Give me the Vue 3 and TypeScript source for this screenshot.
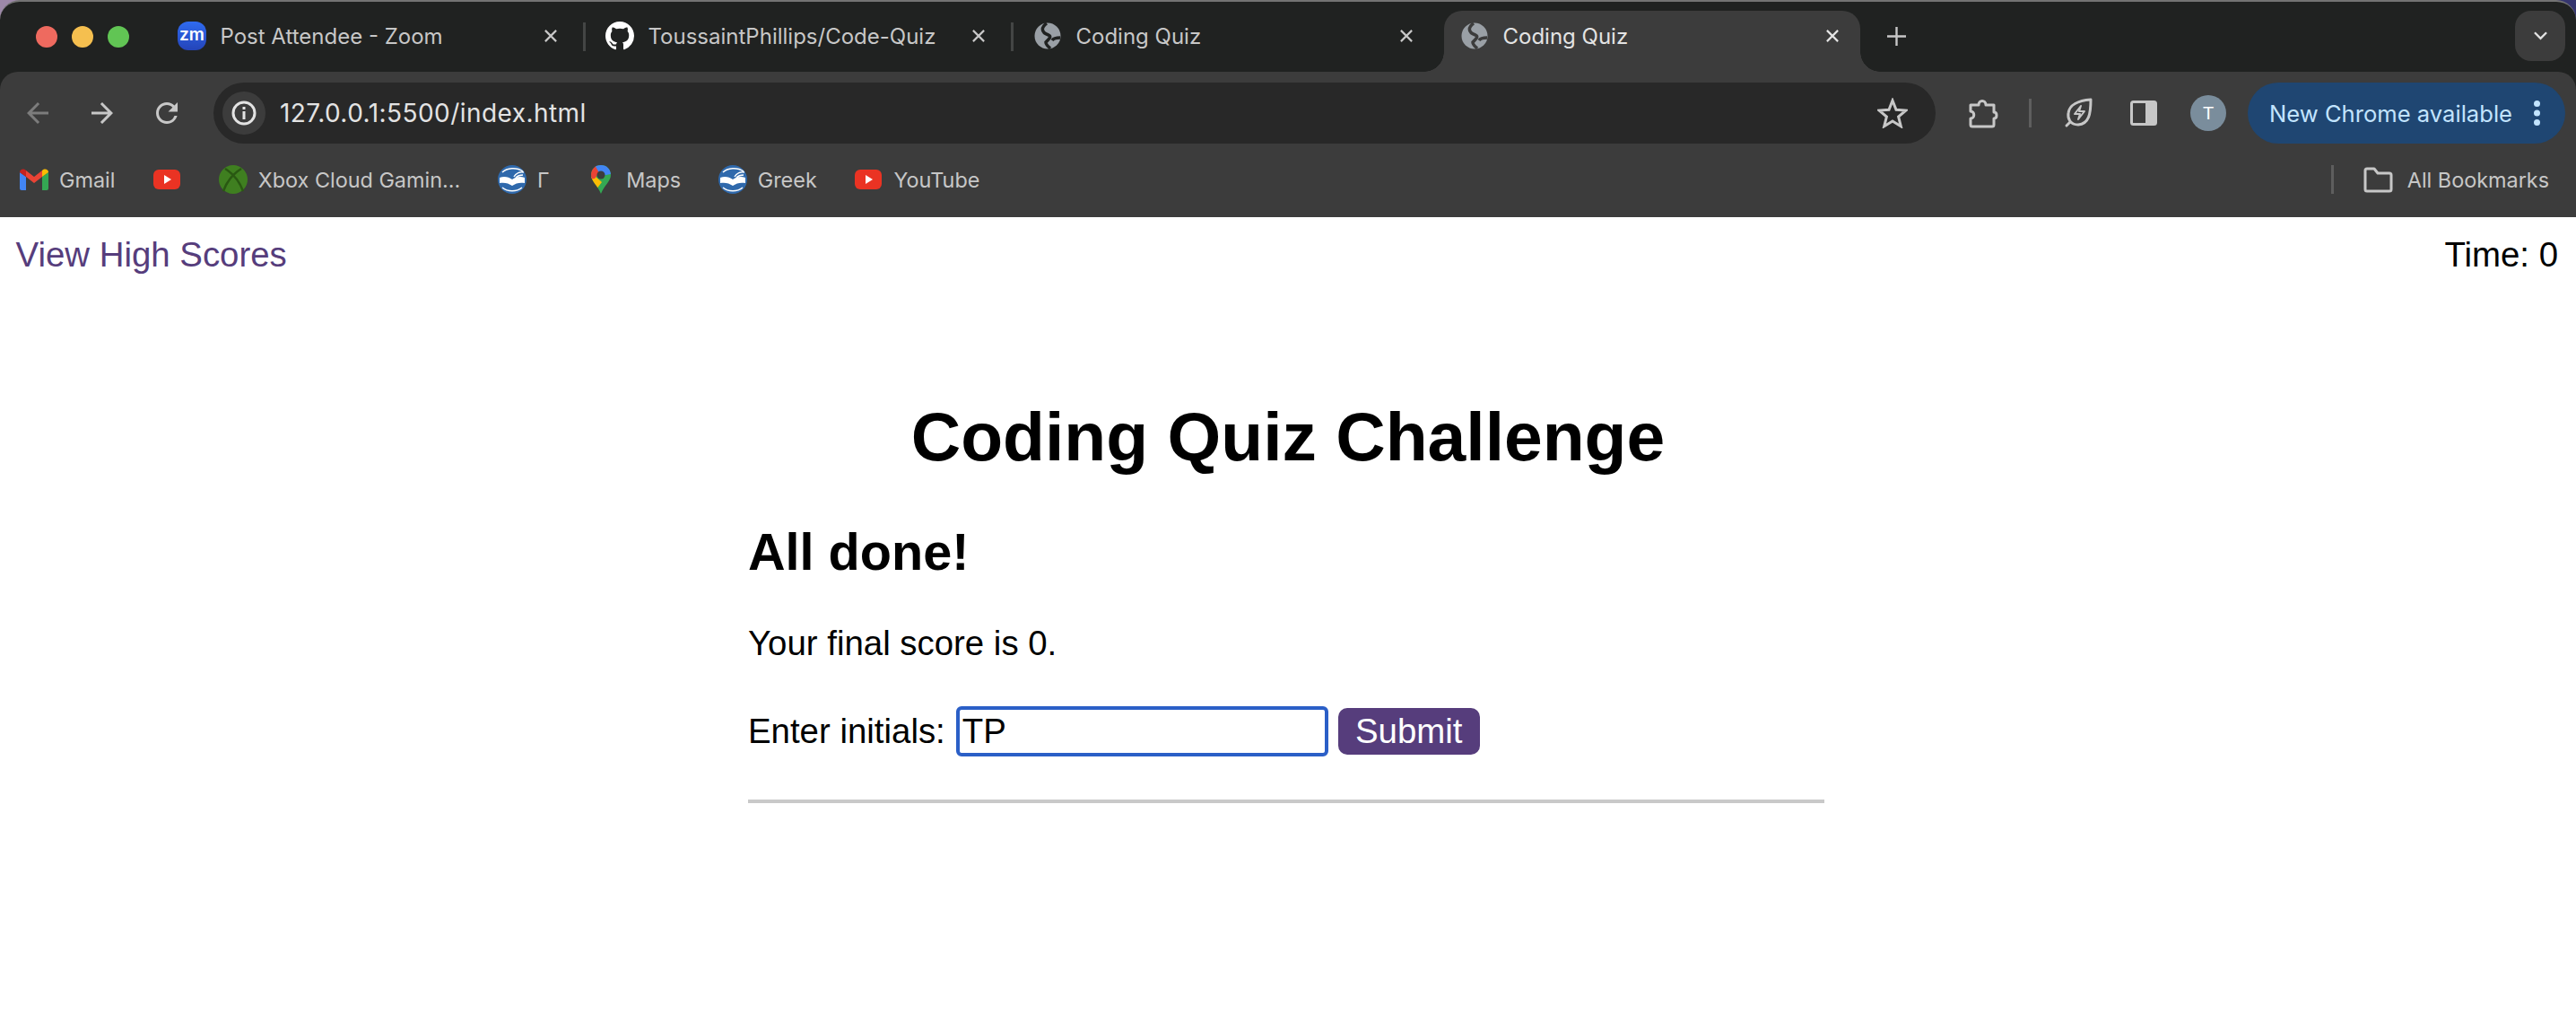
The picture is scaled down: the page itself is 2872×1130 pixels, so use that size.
<template>
  <div class="window">
    <header class="chrome">
      <div class="tabstrip">
        <div class="lights">
          <span class="light red"></span>
          <span class="light yellow"></span>
          <span class="light green"></span>
        </div>
        <div
          v-for="tab in tabs"
          :key="tab.id"
          class="tab"
          :class="{ active: tab.active, divided: tab.divided }"
        >
          <span v-if="tab.icon === 'zoom'" class="zoom-icon">zm</span>
          <svg v-else-if="tab.icon === 'github'" class="tab-icon" viewBox="0 0 16 16">
            <path fill="#fff" d="M8 0C3.58 0 0 3.58 0 8c0 3.54 2.29 6.53 5.47 7.59.4.07.55-.17.55-.38 0-.19-.01-.82-.01-1.49-2.01.37-2.53-.49-2.69-.94-.09-.23-.48-.94-.82-1.13-.28-.15-.68-.52-.01-.53.63-.01 1.08.58 1.23.82.72 1.21 1.87.87 2.33.66.07-.52.28-.87.51-1.07-1.78-.2-3.64-.89-3.64-3.95 0-.87.31-1.59.82-2.15-.08-.2-.36-1.02.08-2.12 0 0 .67-.21 2.2.82.64-.18 1.32-.27 2-.27.68 0 1.36.09 2 .27 1.53-1.04 2.2-.82 2.2-.82.44 1.1.16 1.92.08 2.12.51.56.82 1.27.82 2.15 0 3.07-1.87 3.75-3.65 3.95.29.25.54.73.54 1.48 0 1.07-.01 1.93-.01 2.2 0 .21.15.46.55.38A8.013 8.013 0 0016 8c0-4.42-3.58-8-8-8z" />
          </svg>
          <svg v-else class="tab-icon" viewBox="0 0 32 32">
            <circle cx="16" cy="16" r="14.500" fill="#9aa0a6" />
            <path
              fill="none"
              :stroke="tab.active ? '#3c3c3c' : '#202221'"
              stroke-width="3.500"
              d="M15 2C9 6 8 12 17 15c4 2 0 5-3 8 0 3 3 5 5 7M30 18c-3 0-7 0-9 3"
            />
          </svg>
          <span class="tab-title">{{ tab.title }}</span>
          <svg class="tab-close" viewBox="0 0 16 16">
            <path d="M1 1l14 14M15 1L1 15" />
          </svg>
        </div>
        <svg class="new-tab" viewBox="0 0 22 22"><path d="M11 0v22M0 11h22" /></svg>
        <div class="tab-search">
          <svg viewBox="0 0 16 10"><path d="M1 1l7 7 7-7" /></svg>
        </div>
      </div>

      <div class="toolbar">
        <button class="tool dim">
          <svg viewBox="0 0 24 24"><path d="M20 11H7.83l5.59-5.59L12 4l-8 8 8 8 1.41-1.41L7.83 13H20z" /></svg>
        </button>
        <button class="tool">
          <svg viewBox="0 0 24 24"><path d="M4 11h12.17l-5.59-5.59L12 4l8 8-8 8-1.41-1.41L16.17 13H4z" /></svg>
        </button>
        <button class="tool">
          <svg viewBox="0 0 24 24"><path d="M17.65 6.35A7.958 7.958 0 0012 4c-4.42 0-7.99 3.58-7.99 8s3.57 8 7.99 8c3.73 0 6.84-2.55 7.73-6h-2.08A5.99 5.99 0 0112 18c-3.31 0-6-2.69-6-6s2.69-6 6-6c1.66 0 3.14.69 4.22 1.78L13 11h7V4l-2.35 2.35z" /></svg>
        </button>

        <div class="omnibox">
          <span class="site-info">
            <svg viewBox="0 0 28 28">
              <circle cx="14" cy="14" r="12" fill="none" stroke="#e3e3e3" stroke-width="3" />
              <rect x="12.5" y="12" width="3" height="9" fill="#e3e3e3" />
              <rect x="12.5" y="7" width="3" height="3" fill="#e3e3e3" />
            </svg>
          </span>
          <span class="url">127.0.0.1:5500/index.html</span>
          <svg class="star" viewBox="0 0 34 34">
            <path d="M17 3l4 10.2 11 .8-8.4 7 2.7 10.7L17 26l-9.3 5.7L10.4 21 2 14l11-.8z" />
          </svg>
        </div>

        <button class="tool puzzle">
          <svg viewBox="0 0 36 36" class="line">
            <path d="M4 9h9c0-6 8-6 8 0h9v8c4 0 4 7 0 7v7a2 2 0 0 1-2 2H6a2 2 0 0 1-2-2v-7c5 0 5-8 0-8z" />
          </svg>
        </button>
        <span class="tool-sep"></span>
        <button class="tool leaf">
          <svg viewBox="0 0 36 36" class="line">
            <path d="M31 3c0 16-2 27-14 28-9 0-12-7-11-13C7 9 17 4 31 3zM8 28l-4 4" />
            <path class="thin" d="M20 10l-7 9h6l-2 6 7-9h-6z" />
          </svg>
        </button>
        <button class="tool">
          <svg viewBox="0 0 36 36" class="panel">
            <rect x="4.5" y="5.5" width="27" height="25" rx="2" />
            <path d="M20 5h10a2 2 0 0 1 2 2v22a2 2 0 0 1-2 2H20z" />
          </svg>
        </button>
        <button class="tool"><span class="avatar">T</span></button>
        <div class="update-chip">
          <span>New Chrome available</span>
          <svg viewBox="0 0 7 28"><circle cx="3.500" cy="3.500" r="3.500" /><circle cx="3.500" cy="14" r="3.500" /><circle cx="3.500" cy="24.500" r="3.500" /></svg>
        </div>
      </div>

      <div class="bookmarks">
        <div v-for="mark in bookmarks" :key="mark.id" class="mark">
          <svg v-if="mark.icon === 'gmail'" class="mark-icon" viewBox="0 0 32 24">
            <path fill="#4285f4" d="M2 24a2 2 0 0 1-2-2V4l7 5v15z" />
            <path fill="#34a853" d="M25 24V9l7-5v18a2 2 0 0 1-2 2z" />
            <path fill="#ea4335" d="M7 9l9 7 9-7V2l-9 7-9-7z" />
            <path fill="#c5221f" d="M0 4c0-3 4-5 7-2v7z" />
            <path fill="#fbbc04" d="M25 2c3-3 7-1 7 2l-7 5z" />
          </svg>
          <svg v-else-if="mark.icon === 'youtube'" class="mark-icon" viewBox="0 0 32 32">
            <rect x="1" y="5" width="30" height="22" rx="6" fill="#ea3323" />
            <path fill="#fff" d="M13 11l8 5-8 5z" />
          </svg>
          <svg v-else-if="mark.icon === 'xbox'" class="mark-icon" viewBox="0 0 32 32">
            <circle cx="16" cy="16" r="16" fill="#3f7f20" />
            <path fill="none" stroke="#295812" stroke-width="2.500" d="M7 4c8 5 16 14 20 25M25 4C17 9 9 18 5 29" />
          </svg>
          <svg v-else-if="mark.icon === 'greek'" class="mark-icon" viewBox="0 0 32 32">
            <circle cx="16" cy="16" r="16" fill="#2f69ac" />
            <path fill="#fff" d="M2 14c5-2 10-1 14 2 4-3 9-4 14-2v6c-5-1-10 0-14 3-4-3-9-4-14-3z" />
            <path fill="none" stroke="#fff" stroke-width="1.5" d="M5 8c5-5 16-6 23-1M18 13c2-4 7-6 11-5M20 14c2-2 5-3 8-3M5 25c6 5 16 5 22 0" />
          </svg>
          <svg v-else class="mark-icon" viewBox="0 0 32 32">
            <clipPath id="pin-shape">
              <path d="M16 0c6.500 0 11 4.800 11 11 0 7-7 11-11 21C12 22 5 18 5 11 5 4.800 9.500 0 16 0z" />
            </clipPath>
            <g clip-path="url(#pin-shape)">
              <rect width="32" height="32" fill="#34a853" />
              <path fill="#fbbc04" d="M0 15l9-3 8 7-10 13H0z" />
              <path fill="#ea4335" d="M0 0h10l6 6-7 9-9 1z" />
              <path fill="#4285f4" d="M9 0h23v9L16 12z" />
            </g>
            <circle cx="16" cy="11" r="4.500" fill="#3c3c3c" />
          </svg>
          <span v-if="mark.label" class="mark-label">{{ mark.label }}</span>
        </div>
        <div class="all-bookmarks">
          <span class="mark-sep"></span>
          <svg viewBox="0 0 34 30" class="folder">
            <path d="M3 5a2 2 0 0 1 2-2h8l4 5h13a2 2 0 0 1 2 2v16a2 2 0 0 1-2 2H5a2 2 0 0 1-2-2z" />
          </svg>
          <span class="mark-label">All Bookmarks</span>
        </div>
      </div>
    </header>

    <main class="page">
      <div class="page-top">
        <a class="scores-link" href="#">View High Scores</a>
        <span>Time: {{ timeLeft }}</span>
      </div>
      <h1>Coding Quiz Challenge</h1>
      <section class="quiz">
        <h2>All done!</h2>
        <p>Your final score is {{ score }}.</p>
        <form class="initials" @submit.prevent>
          <label for="initials">Enter initials:</label>
          <input id="initials" v-model="initials" type="text">
          <button type="submit">Submit</button>
        </form>
        <hr>
      </section>
    </main>
  </div>
</template>

<script setup lang="ts">
import { ref } from "vue";

const timeLeft = ref(0);
const score = ref(0);
const initials = ref("TP");

const tabs = [
  { id: 1, title: "Post Attendee - Zoom", icon: "zoom", active: false, divided: true },
  { id: 2, title: "ToussaintPhillips/Code-Quiz", icon: "github", active: false, divided: true },
  { id: 3, title: "Coding Quiz", icon: "globe", active: false, divided: false },
  { id: 4, title: "Coding Quiz", icon: "globe", active: true, divided: false },
];

const bookmarks = [
  { id: 1, label: "Gmail", icon: "gmail" },
  { id: 2, label: "", icon: "youtube" },
  { id: 3, label: "Xbox Cloud Gamin...", icon: "xbox" },
  { id: 4, label: "Γ", icon: "greek" },
  { id: 5, label: "Maps", icon: "maps" },
  { id: 6, label: "Greek", icon: "greek" },
  { id: 7, label: "YouTube", icon: "youtube" },
];
</script>

<style>
html,
body {
  margin: 0;
  background: #fff;
}
</style>

<style scoped>
.window {
  width: 2872px;
  height: 1130px;
  overflow: hidden;
  background: linear-gradient(90deg, #9c88a8 50%, #35356e 50%);
  font-family: "Liberation Sans", Arial, sans-serif;
}

.chrome {
  height: 242px;
  box-sizing: border-box;
  border-radius: 22px 22px 0 0;
  border-top: 2px solid #737373;
  background: #202221;
  font-family: Inter, Roboto, "Liberation Sans", sans-serif;
}

/* tab strip */
.tabstrip {
  height: 78px;
  display: flex;
  align-items: flex-start;
}

.lights {
  width: 174px;
  height: 78px;
  flex-shrink: 0;
  box-sizing: border-box;
  padding: 27px 0 0 40px;
  display: flex;
  gap: 16px;
}

.light {
  width: 24px;
  height: 24px;
  border-radius: 50%;
}

.red { background: #ee6a5f; }
.yellow { background: #f5bf4f; }
.green { background: #61c554; }

.tab {
  position: relative;
  width: 477px;
  height: 68px;
  margin-top: 10px;
  flex-shrink: 0;
  box-sizing: border-box;
  padding: 0 30px 12px 24px;
  display: flex;
  align-items: center;
  color: #c7c7c7;
  font-size: 24px;
}

.tab.divided::after {
  content: "";
  position: absolute;
  right: -2px;
  top: 13px;
  width: 3px;
  height: 32px;
  background: #444645;
}

.tab.active {
  width: 464px;
  margin-left: 5px;
  padding: 0 24px 12px 18px;
  background: #3c3c3c;
  border-radius: 20px 20px 0 0;
  color: #e3e3e3;
}

.tab.active::before,
.tab.active::after {
  content: "";
  position: absolute;
  bottom: 0;
  width: 22px;
  height: 22px;
}

.tab.active::before {
  left: -22px;
  background: radial-gradient(circle at 0 0, transparent 21.500px, #3c3c3c 22px);
}

.tab.active::after {
  right: -22px;
  background: radial-gradient(circle at 100% 0, transparent 21.500px, #3c3c3c 22px);
}

.zoom-icon {
  width: 32px;
  height: 32px;
  border-radius: 12px;
  flex-shrink: 0;
  background: linear-gradient(180deg, #2f6bf0, #2444b8);
  color: #fff;
  font-size: 19px;
  font-weight: 600;
  line-height: 30px;
  text-align: center;
}

.tab-icon {
  width: 32px;
  height: 32px;
  flex-shrink: 0;
}

.tab-title {
  flex: 1;
  margin-left: 15.500px;
  white-space: nowrap;
}

.tab-close {
  width: 14px;
  height: 14px;
  flex-shrink: 0;
  fill: none;
  stroke: currentColor;
  stroke-width: 2.500;
}

.new-tab {
  width: 21px;
  height: 21px;
  margin: 28px 0 0 30px;
  flex-shrink: 0;
  fill: none;
  stroke: #c7c7c7;
  stroke-width: 2.500;
}

.tab-search {
  width: 56px;
  height: 56px;
  margin: 10px 12px 0 auto;
  border-radius: 18px;
  background: #3c3c3c;
  display: flex;
  align-items: center;
  justify-content: center;
}

.tab-search svg {
  width: 15px;
  height: 10px;
  fill: none;
  stroke: #e3e3e3;
  stroke-width: 2.500;
}

/* toolbar */
.toolbar {
  height: 80px;
  box-sizing: border-box;
  padding: 12px 0 0 6px;
  background: #3c3c3c;
  border-radius: 20px 20px 0 0;
  display: flex;
  align-items: flex-start;
}

.tool {
  width: 72px;
  height: 68px;
  flex-shrink: 0;
  padding: 0;
  border: 0;
  background: none;
  display: flex;
  align-items: center;
  justify-content: center;
  fill: #c7c7c7;
}

.tool svg {
  width: 36px;
  height: 36px;
}

.tool.dim {
  fill: #7c7c7c;
}

.omnibox {
  width: 1920px;
  height: 68px;
  margin-left: 16px;
  flex-shrink: 0;
  box-sizing: border-box;
  padding: 0 31px 0 10px;
  border-radius: 34px;
  background: #282828;
  display: flex;
  align-items: center;
  color: #e3e3e3;
  font-size: 28px;
}

.site-info {
  width: 48px;
  height: 48px;
  border-radius: 50%;
  background: #3c3c3c;
  display: flex;
  align-items: center;
  justify-content: center;
}

.site-info svg {
  width: 28px;
  height: 28px;
}

.url {
  flex: 1;
  margin-left: 16px;
  letter-spacing: 0.450px;
}

.star {
  width: 34px;
  height: 34px;
  fill: none;
  stroke: #c7c7c7;
  stroke-width: 3;
}

.puzzle {
  margin-left: 17px;
}

.line {
  fill: none;
  stroke: #c7c7c7;
  stroke-width: 3;
  stroke-linejoin: round;
  stroke-linecap: round;
}

.line .thin {
  stroke-width: 2;
}

.tool-sep {
  width: 3px;
  height: 32px;
  margin: 18px 0 0 15px;
  flex-shrink: 0;
  background: #5e5e5e;
}

.leaf {
  margin-left: 17px;
}

.panel rect {
  fill: none;
  stroke: #c7c7c7;
  stroke-width: 3;
}

.panel path {
  fill: #c7c7c7;
}

.avatar {
  width: 40px;
  height: 40px;
  border-radius: 50%;
  background: #7a8d9c;
  color: #fff;
  font-size: 20px;
  line-height: 40px;
  text-align: center;
}

.update-chip {
  width: 354px;
  height: 68px;
  margin-left: 8px;
  flex-shrink: 0;
  box-sizing: border-box;
  padding: 0 28px 0 24px;
  border-radius: 34px;
  background: #1f4672;
  display: flex;
  align-items: center;
  justify-content: space-between;
  color: #c2e4ff;
  font-size: 25.600px;
}

.update-chip svg {
  width: 7px;
  height: 28px;
  fill: #c2e4ff;
}

/* bookmarks bar */
.bookmarks {
  height: 82px;
  box-sizing: border-box;
  padding: 0 30px 2px 22px;
  background: #3c3c3c;
  display: flex;
  align-items: center;
  gap: 41.700px;
  color: #c7c7c7;
  font-size: 23.400px;
}

.mark,
.all-bookmarks {
  display: flex;
  align-items: center;
  gap: 12px;
}

.mark-icon {
  width: 32px;
  height: 32px;
  flex-shrink: 0;
}

.all-bookmarks {
  margin-left: auto;
  gap: 16px;
}

.mark-sep {
  width: 3px;
  height: 32px;
  margin-right: 16px;
  background: #5e5e5e;
}

.folder {
  width: 34px;
  height: 30px;
  fill: none;
  stroke: #c7c7c7;
  stroke-width: 3;
  stroke-linejoin: round;
}

/* page */
.page {
  height: 888px;
  box-sizing: border-box;
  background: #fff;
  color: #000;
  font-size: 38.400px;
  text-align: left;
}

.page-top {
  padding: 20px 20px 0 17.500px;
  display: flex;
  justify-content: space-between;
}

.scores-link {
  color: #563d7c;
  text-decoration: none;
}

h1 {
  margin: 136px 0 0;
  font-size: 76.800px;
  line-height: 88px;
  text-align: center;
}

.quiz {
  width: 1200px;
  margin: 52px 0 0 834px;
}

h2 {
  margin: 0;
  font-size: 57.600px;
  line-height: 66px;
}

p {
  margin: 47px 0 0;
}

.initials {
  margin-top: 48px;
  display: flex;
  align-items: center;
  gap: 11px;
}

input {
  width: 415px;
  height: 56px;
  box-sizing: border-box;
  margin-left: 1px;
  padding: 0 0 0 3px;
  border: 4px solid #2b5fc7;
  border-radius: 6px;
  outline: none;
  color: #000;
  font: inherit;
}

.initials button {
  height: 52px;
  padding: 0 19.200px;
  border: 0;
  border-radius: 10px;
  background: #563d7c;
  color: #fff;
  font: inherit;
  line-height: 52px;
}

hr {
  height: 4px;
  margin: 48px 0 0;
  border: 0;
  background: #c9c9c9;
}
</style>
